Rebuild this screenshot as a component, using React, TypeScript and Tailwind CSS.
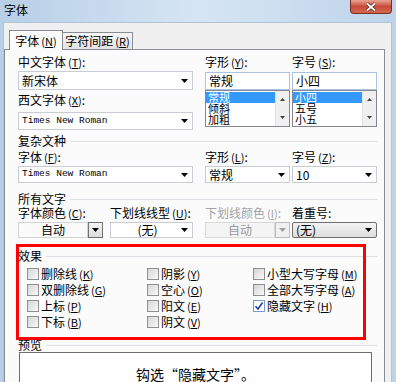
import React from 'react';

const Arrow: React.FC = () => (
  <svg width="7" height="4" viewBox="0 0 7 4" className="shrink-0">
    <path d="M0 0h7L3.5 4z" fill="#000" />
  </svg>
);

const Acc: React.FC<{ k: string }> = ({ k }) => (
  <span className="ml-[2px] text-[11px]">
    (<span className="underline">{k}</span>)
  </span>
);

const Label: React.FC<{ text: string; k?: string; disabled?: boolean; className?: string }> = ({
  text,
  k,
  disabled,
  className = '',
}) => (
  <div
    className={`h-[12px] whitespace-nowrap text-[12px] leading-[12px] ${
      disabled ? 'text-[#a3a3a3]' : 'text-black'
    } ${className}`}
  >
    {text}
    {k && <Acc k={k} />}:
  </div>
);

const Combo: React.FC<{ value: string; mono?: boolean; center?: boolean; className?: string }> = ({
  value,
  mono,
  center,
  className = '',
}) => (
  <div
    className={`flex items-center border border-[#c9cdd3] bg-white pl-[3px] pr-[4px] ${className}`}
  >
    <span
      className={`flex-1 whitespace-nowrap ${center ? 'text-center' : ''} ${
        mono ? "font-['Liberation_Mono',monospace] text-[9.5px]" : 'text-[12px] leading-[12px]'
      }`}
    >
      {value}
    </span>
    <Arrow />
  </div>
);

const Group: React.FC<{ title: string; className?: string }> = ({ title, className = '' }) => (
  <div className={`flex h-[12px] items-center ${className}`}>
    <span className="mr-[4px] text-[12px] leading-[12px]">{title}</span>
    <div className="h-px flex-1 bg-[#dcdfe3]" />
  </div>
);

const ListBox: React.FC<{ items: string[] }> = ({ items }) => (
  <div className="flex h-[37px] overflow-hidden border border-[#828790] bg-white">
    <div className="flex-1 pt-[1px]">
      {items.map((it, i) => (
        <div
          key={it}
          className={`h-[11px] pl-[2px] text-[11px] leading-[11px] ${
            i === 0 ? 'bg-[#3399ff] text-white' : 'text-black'
          }`}
        >
          {it}
        </div>
      ))}
    </div>
    <div className="flex w-[14px] flex-col items-center justify-between border-l border-[#e3e3e3] bg-[#f0f0f0] py-[7px]">
      <svg width="5" height="3" viewBox="0 0 5 3">
        <path d="M0 3h5L2.5 0z" fill="#444" />
      </svg>
      <svg width="5" height="3" viewBox="0 0 5 3">
        <path d="M0 0h5L2.5 3z" fill="#444" />
      </svg>
    </div>
  </div>
);

const Check: React.FC<{ label: string; k: string; checked?: boolean }> = ({ label, k, checked }) => (
  <div className="flex h-[16px] items-center">
    <div
      className={`mr-[2px] flex h-[12px] w-[12px] items-center justify-center border ${
        checked
          ? 'border-[#7a9cc8] bg-white'
          : 'border-[#8f8f8f] bg-gradient-to-br from-[#d6d6d6] to-[#f9f9f9]'
      }`}
    >
      {checked && (
        <svg width="10" height="10" viewBox="0 0 10 10">
          <path d="M1.5 5.2L4 8L8.6 1.5" stroke="#1f3f9c" strokeWidth="1.6" fill="none" />
        </svg>
      )}
    </div>
    <span className="whitespace-nowrap text-[12px] leading-[12px]">
      {label}
      <Acc k={k} />
    </span>
  </div>
);

const App: React.FC = () => {
  return (
    <div className="relative h-[382px] w-[396px] overflow-hidden bg-gradient-to-r from-[#b8cfe7] via-[#d6e5f4] to-[#bed4ea] font-['Noto_Sans_CJK_SC','Noto_Sans',sans-serif] text-black">
      {/* title bar */}
      <div className="flex h-[22px] items-start justify-between">
        <div className="ml-[4px] mt-[4px] text-[12px] leading-[12px]">字体</div>
        <div className="mr-[4px] flex h-[14px] w-[42px] items-center justify-center rounded-b-[4px] border border-t-0 border-[#7a2d22] bg-gradient-to-b from-[#e9a392] via-[#c84a3a] to-[#d36a4e]">
          <svg width="12" height="10" viewBox="0 0 12 10">
            <path d="M2 1.5L10 8.5M10 1.5L2 8.5" stroke="#5a1d14" strokeWidth="3.2" />
            <path d="M2 1.5L10 8.5M10 1.5L2 8.5" stroke="#fff" strokeWidth="1.8" />
          </svg>
        </div>
      </div>

      {/* dialog body */}
      <div className="ml-[3px] mr-[4px] h-[360px] border border-b-0 border-[#b3c3d6] bg-[#f0f0f0] pt-[7px]">
        {/* tabs */}
        <div className="relative z-10 flex h-[19px] items-end pl-[5px]">
          <div className="-mb-px flex h-[20px] w-[54px] items-center justify-center border border-b-0 border-[#898c95] bg-[#fbfbfb] text-[12px] leading-[12px]">
            字体<Acc k="N" />
          </div>
          <div className="flex h-[17px] w-[70px] items-center justify-center border border-b-0 border-l-0 border-[#898c95] bg-gradient-to-b from-[#f6f6f6] to-[#e3e3e3] text-[12px] leading-[12px]">
            字符间距<Acc k="R" />
          </div>
        </div>

        {/* panel */}
        <div className="h-[340px] w-[381px] border border-[#898c95] bg-[#fbfbfb] pl-[13px] pr-[7px] pt-[6px]">
          <div className="flex">
            <div className="w-[175px]">
              <Label text="中文字体" k="T" />
              <Combo value="新宋体" className="mt-[3px] h-[19px]" />
              <Label text="西文字体" k="X" className="mt-[4px]" />
              <Combo value="Times New Roman" mono className="mt-[6px] h-[18px]" />
            </div>
            <div className="ml-[12px] w-[85px]">
              <Label text="字形" k="Y" />
              <div className="mt-[4px] h-[18px] border border-[#a9c4e2] bg-white pl-[3px] text-[12px] leading-[16px]">
                常规
              </div>
              <ListBox items={['常规', '倾斜', '加粗']} />
            </div>
            <div className="ml-[2px] w-[85px]">
              <Label text="字号" k="S" />
              <div className="mt-[4px] h-[18px] border border-[#a9c4e2] bg-white pl-[3px] text-[12px] leading-[16px]">
                小四
              </div>
              <ListBox items={['小四', '五号', '小五']} />
            </div>
          </div>

          <Group title="复杂文种" className="mt-[5px]" />
          <div className="mt-[4px] flex">
            <div className="w-[175px]">
              <Label text="字体" k="F" />
              <Combo value="Times New Roman" mono className="mt-[3px] h-[17px]" />
            </div>
            <div className="ml-[12px] w-[85px]">
              <Label text="字形" k="L" />
              <Combo value="常规" className="mt-[3px] h-[17px]" />
            </div>
            <div className="ml-[2px] w-[85px]">
              <Label text="字号" k="Z" />
              <Combo value="10" className="mt-[3px] h-[17px]" />
            </div>
          </div>

          <Group title="所有文字" className="mt-[10px]" />
          <div className="mt-[2px] flex">
            <div className="w-[85px]">
              <Label text="字体颜色" k="C" />
              <div className="mt-[3px] flex h-[16px]">
                <div className="flex flex-1 items-center justify-center border border-[#d4d4d4] bg-[#fafafa] text-[12px] leading-[12px]">
                  自动
                </div>
                <div className="flex w-[15px] items-center justify-center border border-[#707070] bg-gradient-to-b from-[#f4f4f4] to-[#dcdcdc]">
                  <Arrow />
                </div>
              </div>
            </div>
            <div className="ml-[7px] w-[83px]">
              <Label text="下划线线型" k="U" />
              <Combo value="(无)" center className="mt-[3px] h-[16px]" />
            </div>
            <div className="ml-[12px] w-[85px]">
              <Label text="下划线颜色" k="I" disabled />
              <div className="mt-[3px] flex h-[16px] text-[#9a9a9a]">
                <div className="flex flex-1 items-center justify-center border border-[#dadada] bg-[#f4f4f4] text-[12px] leading-[12px]">
                  自动
                </div>
                <div className="flex w-[15px] items-center justify-center border border-[#bcbcbc] bg-[#f0f0f0]">
                  <svg width="7" height="4" viewBox="0 0 7 4">
                    <path d="M0 0h7L3.5 4z" fill="#a0a0a0" />
                  </svg>
                </div>
              </div>
            </div>
            <div className="ml-[2px] w-[85px]">
              <Label text="着重号" />
              <div className="mt-[3px] flex h-[16px] items-center rounded-[2px] border border-[#707070] bg-gradient-to-b from-[#f3f3f3] to-[#dddddd] pl-[3px] pr-[4px]">
                <span className="flex-1 text-[12px] leading-[12px]">(无)</span>
                <Arrow />
              </div>
            </div>
          </div>

          {/* effects */}
          <div className="relative mt-[12px]">
            <Group title="效果" />
            <div className="mt-[4px] flex pl-[9px]">
              <div className="w-[120px]">
                <Check label="删除线" k="K" />
                <Check label="双删除线" k="G" />
                <Check label="上标" k="P" />
                <Check label="下标" k="B" />
              </div>
              <div className="w-[106px]">
                <Check label="阴影" k="Y" />
                <Check label="空心" k="O" />
                <Check label="阳文" k="E" />
                <Check label="阴文" k="V" />
              </div>
              <div className="flex-1">
                <Check label="小型大写字母" k="M" />
                <Check label="全部大写字母" k="A" />
                <Check label="隐藏文字" k="H" checked />
              </div>
            </div>
            <div className="pointer-events-none absolute -left-[2px] -top-[6px] h-[96px] w-[350px] border-[3px] border-[#ff0000]" />
          </div>

          <Group title="预览" className="mt-[9px]" />
          <div className="ml-[1px] mt-[1px] h-[40px] w-[353px] border border-[#6d6d6d] bg-white pt-[14px] text-center text-[14px] leading-[14px]">
            钩选“隐藏文字”。
          </div>
        </div>
      </div>
    </div>
  );
};

export default App;
